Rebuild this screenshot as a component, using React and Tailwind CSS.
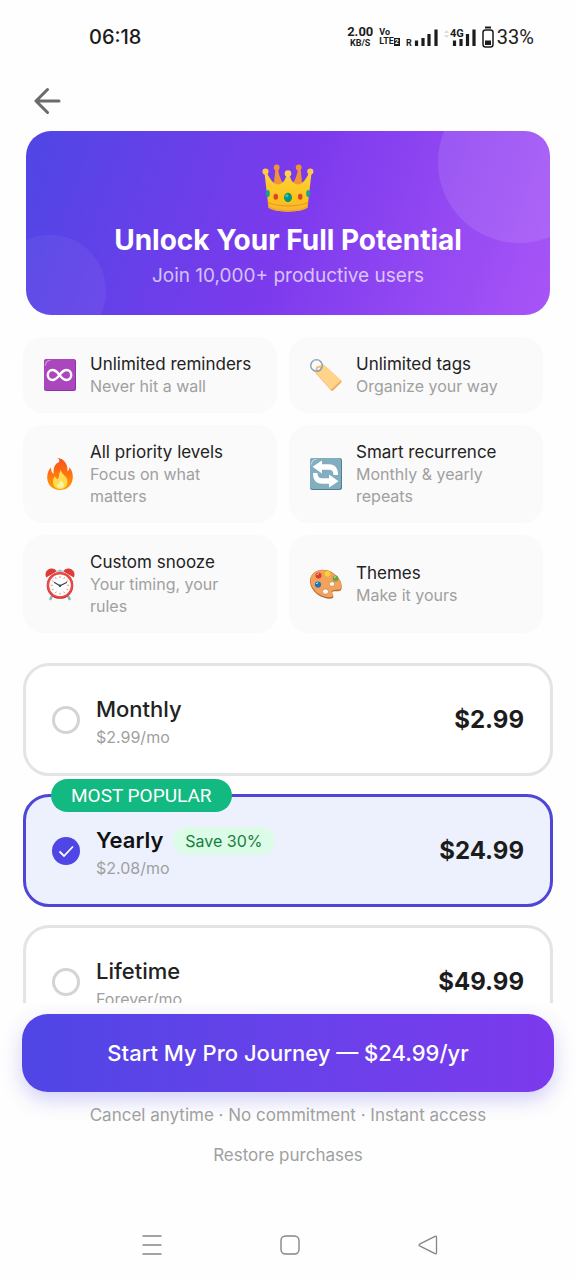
import React, { useState } from "react";

const CrownIcon = () => (
    <svg viewBox="0 0 52 49" className="w-[52px] h-[49px]" aria-hidden="true">
        <defs>
            <linearGradient id="crownGold" x1="0" y1="0" x2="0" y2="1">
                <stop offset="0" stopColor="#fdd13a" />
                <stop offset="0.7" stopColor="#fcc21b" />
                <stop offset="1" stopColor="#f9b233" />
            </linearGradient>
        </defs>
        <path d="M13.5 4 L16 4 C17 12 19 18 25 23 L27 23 C33 18 35 12 36 4 L38.500 4 L41 28 L11 28 Z" fill="#f19534" />
        <circle cx="14.700" cy="3.500" r="2.900" fill="#f19534" />
        <circle cx="36.700" cy="3.500" r="2.900" fill="#f19534" />
        <path d="M2.500 9 L5 9 C8 15 11 19.500 15.500 20.500 C20.500 20.500 23.500 16 24.500 11 L27.500 11 C28.500 16 31.500 20.500 36.500 20.500 C41 19.500 44 15 47 9 L49.500 9 L45.500 43.500 C38 49 14 49 6.500 43.500 Z" fill="url(#crownGold)" />
        <circle cx="3.500" cy="7.500" r="3.100" fill="#fcc94a" />
        <circle cx="26" cy="9.500" r="3.300" fill="#fdd04e" />
        <circle cx="48.300" cy="7.500" r="3.100" fill="#fcc94a" />
        <path d="M6 38.500 C15 43 37 43 46 38.500" stroke="#ed9b20" strokeWidth="1.300" fill="none" />
        <path d="M6.500 43 C15 48 37 48 45.500 43" stroke="#f3a52b" strokeWidth="1.500" fill="none" />
        <ellipse cx="26" cy="33.500" rx="4" ry="4.700" fill="#07957b" />
        <ellipse cx="24.800" cy="31.800" rx="1.600" ry="1.800" fill="#3dc1ad" />
        <ellipse cx="13.800" cy="32.800" rx="2.300" ry="3" fill="#e2402e" />
        <ellipse cx="38.200" cy="32.800" rx="2.300" ry="3" fill="#e2402e" />
        <ellipse cx="5.800" cy="29.500" rx="2" ry="3.500" fill="#16a28b" />
        <ellipse cx="46.200" cy="29.500" rx="2" ry="3.500" fill="#16a28b" />
    </svg>
);

const InfinityIcon = () => (
    <svg viewBox="0 0 34 34" className="w-[34px] h-[34px]" aria-hidden="true">
        <rect x="1" y="1" width="32" height="32" rx="2.500" fill="#8e32a8" />
        <rect x="1" y="1" width="31" height="31" rx="2.500" fill="#ab47bc" />
        <path d="M2.500 7 Q3 2.500 7 2.500" stroke="#d79ce0" strokeWidth="1.200" fill="none" strokeLinecap="round" />
        <path d="M16.500 17 C13.500 13 11.500 12 9.500 12 C6.500 12 4.800 14.200 4.800 17 C4.800 19.800 6.500 22 9.500 22 C11.500 22 13.500 21 16.500 17 C19.500 13 21.500 12 23.500 12 C26.500 12 28.200 14.200 28.200 17 C28.200 19.800 26.500 22 23.500 22 C21.500 22 19.500 21 16.500 17 Z" fill="none" stroke="#fff" strokeWidth="2.400" />
    </svg>
);

const TagIcon = () => (
    <svg viewBox="0 0 34 34" className="w-[34px] h-[34px]" aria-hidden="true">
        <path d="M7 9 L14.500 6.500 L32 22.500 Q33 23.500 32.200 24.500 L24 32.500 Q23 33.300 22 32.300 L6.500 15 Z" fill="#efa956" />
        <path d="M7.500 8.500 L14.500 6.500 L31.500 21.500 Q32 22.300 31.400 23 L23 31 Q22 31.700 21.200 30.800 L6.700 14.500 Z" fill="#ffd38a" />
        <circle cx="10" cy="11" r="2.100" fill="#fafafa" stroke="#c88d4b" strokeWidth="0.700" />
        <circle cx="7.500" cy="7.500" r="5.800" fill="none" stroke="#82a0ad" strokeWidth="1.400" />
        <path d="M3.500 4 A5.500 5.500 0 0 1 10 2.500" fill="none" stroke="#bdd0d8" strokeWidth="0.800" />
    </svg>
);

const FireIcon = () => (
    <svg viewBox="0 0 34 34" className="w-[34px] h-[34px]" aria-hidden="true">
        <defs>
            <linearGradient id="flame" x1="0" y1="0" x2="0" y2="1">
                <stop offset="0" stopColor="#f4511e" />
                <stop offset="0.500" stopColor="#ff7411" />
                <stop offset="1" stopColor="#ffa000" />
            </linearGradient>
        </defs>
        <path d="M14.500 1 C21 1.500 25 7 24.600 14.500 C26 13.500 26.500 11.500 26.200 10 C29 13 30 17 29.800 20.500 C29.500 28.500 24 33 17 33 C9.500 33 4.300 28 4.200 20.500 C4.200 16 6 12.500 8 10.500 C8 13.500 8.500 15.500 10.500 17 C10.500 11 11 7.500 16 5 C17 3.500 15.800 2 14.500 1 Z" fill="url(#flame)" />
        <path d="M18 13 C18 17.500 24.500 18.500 24.500 24.500 C24.500 29 21.500 32 17.300 32 C12.500 32 10 29 10 24.500 C10 22 11 20 12 19 C12.500 21 13.500 22 14.700 22 C17 20.500 14.800 17.500 18 13 Z" fill="#ffdc4f" />
        <path d="M17.500 22 C18 25 21 25.500 21 28 C21 30.500 19.500 31.500 17.500 31.500 C15 31.500 14 30 14 28 C16 28 17 25 17.500 22 Z" fill="#fff3a1" />
    </svg>
);

const RepeatIcon = () => (
    <svg viewBox="0 0 34 34" className="w-[34px] h-[34px]" aria-hidden="true">
        <rect x="1" y="1" width="32" height="32" rx="2.500" fill="#507f91" />
        <rect x="1" y="1" width="31" height="31" rx="2.500" fill="#82aec0" />
        <path d="M2.500 7 Q3 2.500 7 2.500" stroke="#b9d6e2" strokeWidth="1.200" fill="none" strokeLinecap="round" />
        <path d="M3.500 9.800 L13 3.500 V7.300 H20 C26 7.300 29 11 29 18 H24.500 C24.500 14.500 23 12.800 20 12.800 H13 V16.500 Z" fill="#fff" />
        <path d="M29.500 24.300 L20 30.500 V26.800 H13 C7 26.800 4 23 4 16 H8.500 C8.500 19.500 10 21.300 13 21.300 H20 V17.500 Z" fill="#fff" />
    </svg>
);

const ClockIcon = () => (
    <svg viewBox="0 0 34 34" className="w-[34px] h-[34px]" aria-hidden="true">
        <path d="M9 29 L7 33 M25 29 L27 33" stroke="#82aec0" strokeWidth="2.200" />
        <path d="M13.500 4 H20.500 M17 2.500 V5" stroke="#82aec0" strokeWidth="1" />
        <path d="M3.200 10.500 C1.500 7 3 3 7 1.800 C10 1 12.800 2.300 13.500 4.600 Z" fill="#dd3b36" />
        <path d="M30.800 10.500 C32.500 7 31 3 27 1.800 C24 1 21.200 2.300 20.500 4.600 Z" fill="#dd3b36" />
        <circle cx="17" cy="18.500" r="13.300" fill="#c62828" />
        <circle cx="17" cy="18" r="13" fill="#e94b46" />
        <circle cx="17" cy="18.300" r="10.800" fill="#fff" />
        <path d="M17 9 V11 M17 25.800 V27.600 M7.800 18.300 H9.800 M24.200 18.300 H26.200 M12.400 10.400 L13.300 12 M21.600 10.400 L20.700 12 M12.400 26.200 L13.300 24.600 M21.600 26.200 L20.700 24.600 M9 13.700 L10.600 14.600 M25 13.700 L23.400 14.600 M9 23 L10.600 22 M25 23 L23.400 22" stroke="#e06a65" strokeWidth="0.800" />
        <path d="M11.500 15.500 L17 18.800 L23.500 15.500" stroke="#37474f" strokeWidth="1.200" fill="none" strokeLinecap="round" />
        <circle cx="17" cy="18.700" r="1.200" fill="#37474f" />
    </svg>
);

const PaletteIcon = () => (
    <svg viewBox="0 0 34 34" className="w-[34px] h-[34px]" aria-hidden="true">
        <path d="M1 13 C2 4.500 11 0.800 19 3.500 C28 6.500 34 15 32.500 22 C31.500 25.500 26.500 23.500 24 24.500 C21.500 25.500 25.500 28.500 24 30.800 C22 33 13 31 8.500 27.500 C4 24 0.500 18.500 1 13 Z" fill="#b86a36" />
        <path d="M1.500 12.500 C2.500 4.300 11 1.300 19 4 C27.500 7 33.500 15 32.300 20.800 C31.300 24 26.500 22.200 23.500 23.500 C21 25 25 27.800 23.500 29.600 C21.500 31.500 13 29.500 9 26.500 C4.500 23 1 17.500 1.500 12.500 Z" fill="#f2a259" />
        <ellipse cx="16.500" cy="24.500" rx="3" ry="2.600" fill="#fafafa" stroke="#b86a36" strokeWidth="0.500" />
        <ellipse cx="23" cy="17" rx="2.700" ry="2.300" fill="#fafafa" stroke="#b86a36" strokeWidth="0.500" />
        <circle cx="9.500" cy="8.500" r="3" fill="#d93a37" />
        <circle cx="18.500" cy="6.800" r="2.800" fill="#fbd32f" />
        <circle cx="26.500" cy="11.500" r="2.900" fill="#6ea43c" />
        <circle cx="9" cy="17.500" r="3.100" fill="#1976b8" />
        <path d="M8 7.500 L9.300 6.900 M7.500 16.500 L8.800 15.900 M25.300 10.300 L26.300 9.900" stroke="#fff" strokeWidth="0.900" strokeLinecap="round" />
    </svg>
);

const features = [
    { icon: InfinityIcon, title: "Unlimited reminders", text: "Never hit a wall" },
    { icon: TagIcon, title: "Unlimited tags", text: "Organize your way" },
    { icon: FireIcon, title: "All priority levels", text: "Focus on what matters" },
    { icon: RepeatIcon, title: "Smart recurrence", text: "Monthly & yearly repeats" },
    { icon: ClockIcon, title: "Custom snooze", text: "Your timing, your rules" },
    { icon: PaletteIcon, title: "Themes", text: "Make it yours" },
];

const plans = [
    { id: "monthly", name: "Monthly", sub: "$2.99/mo", price: "$2.99", cta: "$2.99/mo" },
    { id: "yearly", name: "Yearly", sub: "$2.08/mo", price: "$24.99", cta: "$24.99/yr", save: "Save 30%", popular: true },
    { id: "lifetime", name: "Lifetime", sub: "Forever/mo", price: "$49.99", cta: "$49.99" },
];

const StatusBar = () => (
    <div className="shrink-0 h-[74px] pl-[89px] pr-[42px] flex items-center justify-between text-[#1c1c1c] font-['Roboto',sans-serif]">
        <span className="text-[20px] leading-6 font-medium font-['Inter',sans-serif]">06:18</span>
        <div className="flex items-center gap-1.5">
            <div className="flex flex-col items-center font-bold">
                <span className="text-[13px] leading-[12px]">2.00</span>
                <span className="text-[9px] leading-[10px]">KB/S</span>
            </div>
            <div className="flex flex-col text-[9px] leading-[9px] font-bold">
                <span>Vo</span>
                <span className="flex items-center">
                    LTE<span className="bg-[#1c1c1c] text-white text-[7px] leading-[8px] px-px">2</span>
                </span>
            </div>
            <svg viewBox="0 0 32 20" className="w-8 h-5" aria-hidden="true">
                <text x="0" y="19" fontSize="9" fontWeight="700" fill="#1c1c1c">R</text>
                <path d="M10.500 19 V13.500 M17 19 V11 M23 19 V7 M30 19 V2.500" stroke="#1c1c1c" strokeWidth="3.200" />
            </svg>
            <svg viewBox="0 0 32 20" className="w-8 h-5" aria-hidden="true">
                <path d="M0 6 L2.500 3 L5 6 Z M0 8 L2.500 11 L5 8 Z" fill="#ddd" />
                <text x="6" y="10" fontSize="11" fontWeight="700" fill="#1c1c1c">4G</text>
                <path d="M10.500 19 V13.500 M17 19 V12 M23.500 19 V7 M30 19 V2.500" stroke="#1c1c1c" strokeWidth="3.200" />
            </svg>
            <div className="flex items-center gap-[3px]">
                <svg viewBox="0 0 12 22" className="w-3 h-[22px]" aria-hidden="true">
                    <path d="M3 1.500 H9" stroke="#1c1c1c" strokeWidth="2" />
                    <rect x="1" y="4" width="10" height="17" rx="2.500" fill="none" stroke="#1c1c1c" strokeWidth="1.500" />
                    <rect x="3" y="14.500" width="6" height="4.500" fill="#1c1c1c" />
                </svg>
                <span className="text-[20px] leading-6">33%</span>
            </div>
        </div>
    </div>
);

const FeatureCard = ({ feature }) => {
    const Icon = feature.icon;
    return (
        <li className="flex items-center gap-[13px] rounded-[20px] bg-[#fafafa] px-5 py-4">
            <span className="shrink-0">
                <Icon />
            </span>
            <div className="leading-[22px]">
                <h2 className="text-[17px] leading-[22px] text-[#222]">{feature.title}</h2>
                <p className="text-[16px] leading-[22px] text-[#a0a0a0]">{feature.text}</p>
            </div>
        </li>
    );
};

const PlanCard = ({ plan, selected, onSelect }) => (
    <label
        className={`relative flex items-center gap-4 rounded-[26px] border-[3px] px-[26px] py-6 cursor-pointer ${
            selected ? "border-[#5046d6] bg-[#edf1fe]" : "border-[#e4e4e4] bg-white"
        }`}
    >
        {plan.popular && (
            <span className="absolute left-[25px] -top-[18px] rounded-full bg-[#12b981] px-5 text-[19px] leading-[33px] text-white font-['Roboto',sans-serif]">
                MOST POPULAR
            </span>
        )}
        <input type="radio" name="plan" value={plan.id} checked={selected} onChange={onSelect} className="sr-only" />
        <span
            className={`shrink-0 w-7 h-7 rounded-full flex items-center justify-center ${
                selected ? "bg-[#4f46e5]" : "border-[3px] border-[#d4d4d4]"
            }`}
        >
            {selected && (
                <svg viewBox="0 0 28 28" className="w-7 h-7" aria-hidden="true">
                    <path d="M7.500 14.500 L12 19 L21 9.500" fill="none" stroke="#fff" strokeWidth="1.800" />
                </svg>
            )}
        </span>
        <span className="flex flex-col pt-1">
            <span className="flex items-center gap-[10px] text-[22px] leading-[31px]">
                <span className={selected ? "font-semibold text-[#111]" : "font-medium text-[#222]"}>{plan.name}</span>
                {plan.save && (
                    <span className="rounded-full bg-[#dcfce7] px-3 text-[16px] leading-7 text-[#15803d]">{plan.save}</span>
                )}
            </span>
            <span className="text-[16px] leading-6 text-[#a0a0a0]">{plan.sub}</span>
        </span>
        <span className="ml-auto text-[24px] leading-8 font-bold text-[#1c1c1c]">{plan.price}</span>
    </label>
);

const SystemNav = () => (
    <div className="shrink-0 h-[70px] pl-1 flex items-center justify-center gap-[114px]">
        <button aria-label="Recent apps">
            <svg viewBox="0 0 24 24" className="w-6 h-6" fill="none" stroke="#858585" strokeWidth="1.500">
                <path d="M2.500 3 H21.500 M2.500 12 H21.500 M2.500 21 H21.500" />
            </svg>
        </button>
        <button aria-label="Home">
            <svg viewBox="0 0 24 24" className="w-6 h-6" fill="none" stroke="#858585" strokeWidth="1.400">
                <rect x="3" y="3" width="18" height="18" rx="4.500" />
            </svg>
        </button>
        <button aria-label="Back">
            <svg viewBox="0 0 24 24" className="w-6 h-6" fill="none" stroke="#858585" strokeWidth="1.300" strokeLinejoin="round">
                <path d="M3.600 11.200 L19 3.300 Q20.500 2.800 20.500 4.300 V19.700 Q20.500 21.200 19 20.700 L3.600 12.800 Q2.400 12 3.600 11.200 Z" />
            </svg>
        </button>
    </div>
);

export default function App() {
    const [selectedId, setSelectedId] = useState("yearly");
    const selectedPlan = plans.find((plan) => plan.id === selectedId);

    return (
        <div className="h-screen flex flex-col bg-[#fefefe] font-['Inter',sans-serif]">
            <StatusBar />

            {/* Header */}
            <header className="shrink-0 h-[57px] pl-[34px] pt-[13px]">
                <button aria-label="Go back" className="block">
                    <svg viewBox="0 0 28 28" className="w-7 h-7" fill="none" stroke="#6b6b6b" strokeWidth="3" strokeLinecap="round" strokeLinejoin="round">
                        <path d="M25 14 H2 M13.500 2.500 L2 14 L13.500 25.500" />
                    </svg>
                </button>
            </header>

            {/* Scrollable content */}
            <main className="flex-1 min-h-0 overflow-hidden px-[23px]">
                <section className="relative overflow-hidden mx-[3px] rounded-[25px] bg-[linear-gradient(109deg,#4f46e5_0%,#7c3aed_50%,#a855f7_100%)] pt-[33px] pb-[25px] flex flex-col items-center text-center">
                    <div className="absolute -top-[50px] -right-[50px] w-[162px] h-[162px] rounded-full bg-white/10" />
                    <div className="absolute -bottom-[32px] -left-[32px] w-[112px] h-[112px] rounded-full bg-white/5" />
                    <CrownIcon />
                    <h1 className="mt-[10px] text-[28px] leading-[34px] font-bold text-white">Unlock Your Full Potential</h1>
                    <p className="mt-1 text-[19px] leading-[29px] text-white/70">Join 10,000+ productive users</p>
                </section>

                <ul className="mt-[22px] pr-[10px] grid grid-cols-2 gap-3">
                    {features.map((feature) => (
                        <FeatureCard key={feature.title} feature={feature} />
                    ))}
                </ul>

                <div className="mt-[30px] flex flex-col gap-[18px]">
                    {plans.map((plan) => (
                        <PlanCard
                            key={plan.id}
                            plan={plan}
                            selected={plan.id === selectedId}
                            onSelect={() => setSelectedId(plan.id)}
                        />
                    ))}
                </div>
            </main>

            {/* Purchase */}
            <footer className="shrink-0 px-[22px] pt-[11px] pb-[43px] flex flex-col items-center text-[17px] leading-6 text-[#a0a0a0]">
                <button className="w-full rounded-[26px] bg-linear-to-r from-[#4f46e5] to-[#7c3aed] py-[23px] text-[22px] leading-8 font-medium text-white shadow-[0_8px_20px_rgba(79,70,229,0.25)]">
                    Start My Pro Journey — {selectedPlan.cta}
                </button>
                <p className="mt-[11px]">Cancel anytime · No commitment · Instant access</p>
                <button className="mt-4">Restore purchases</button>
            </footer>

            <SystemNav />
        </div>
    );
}
